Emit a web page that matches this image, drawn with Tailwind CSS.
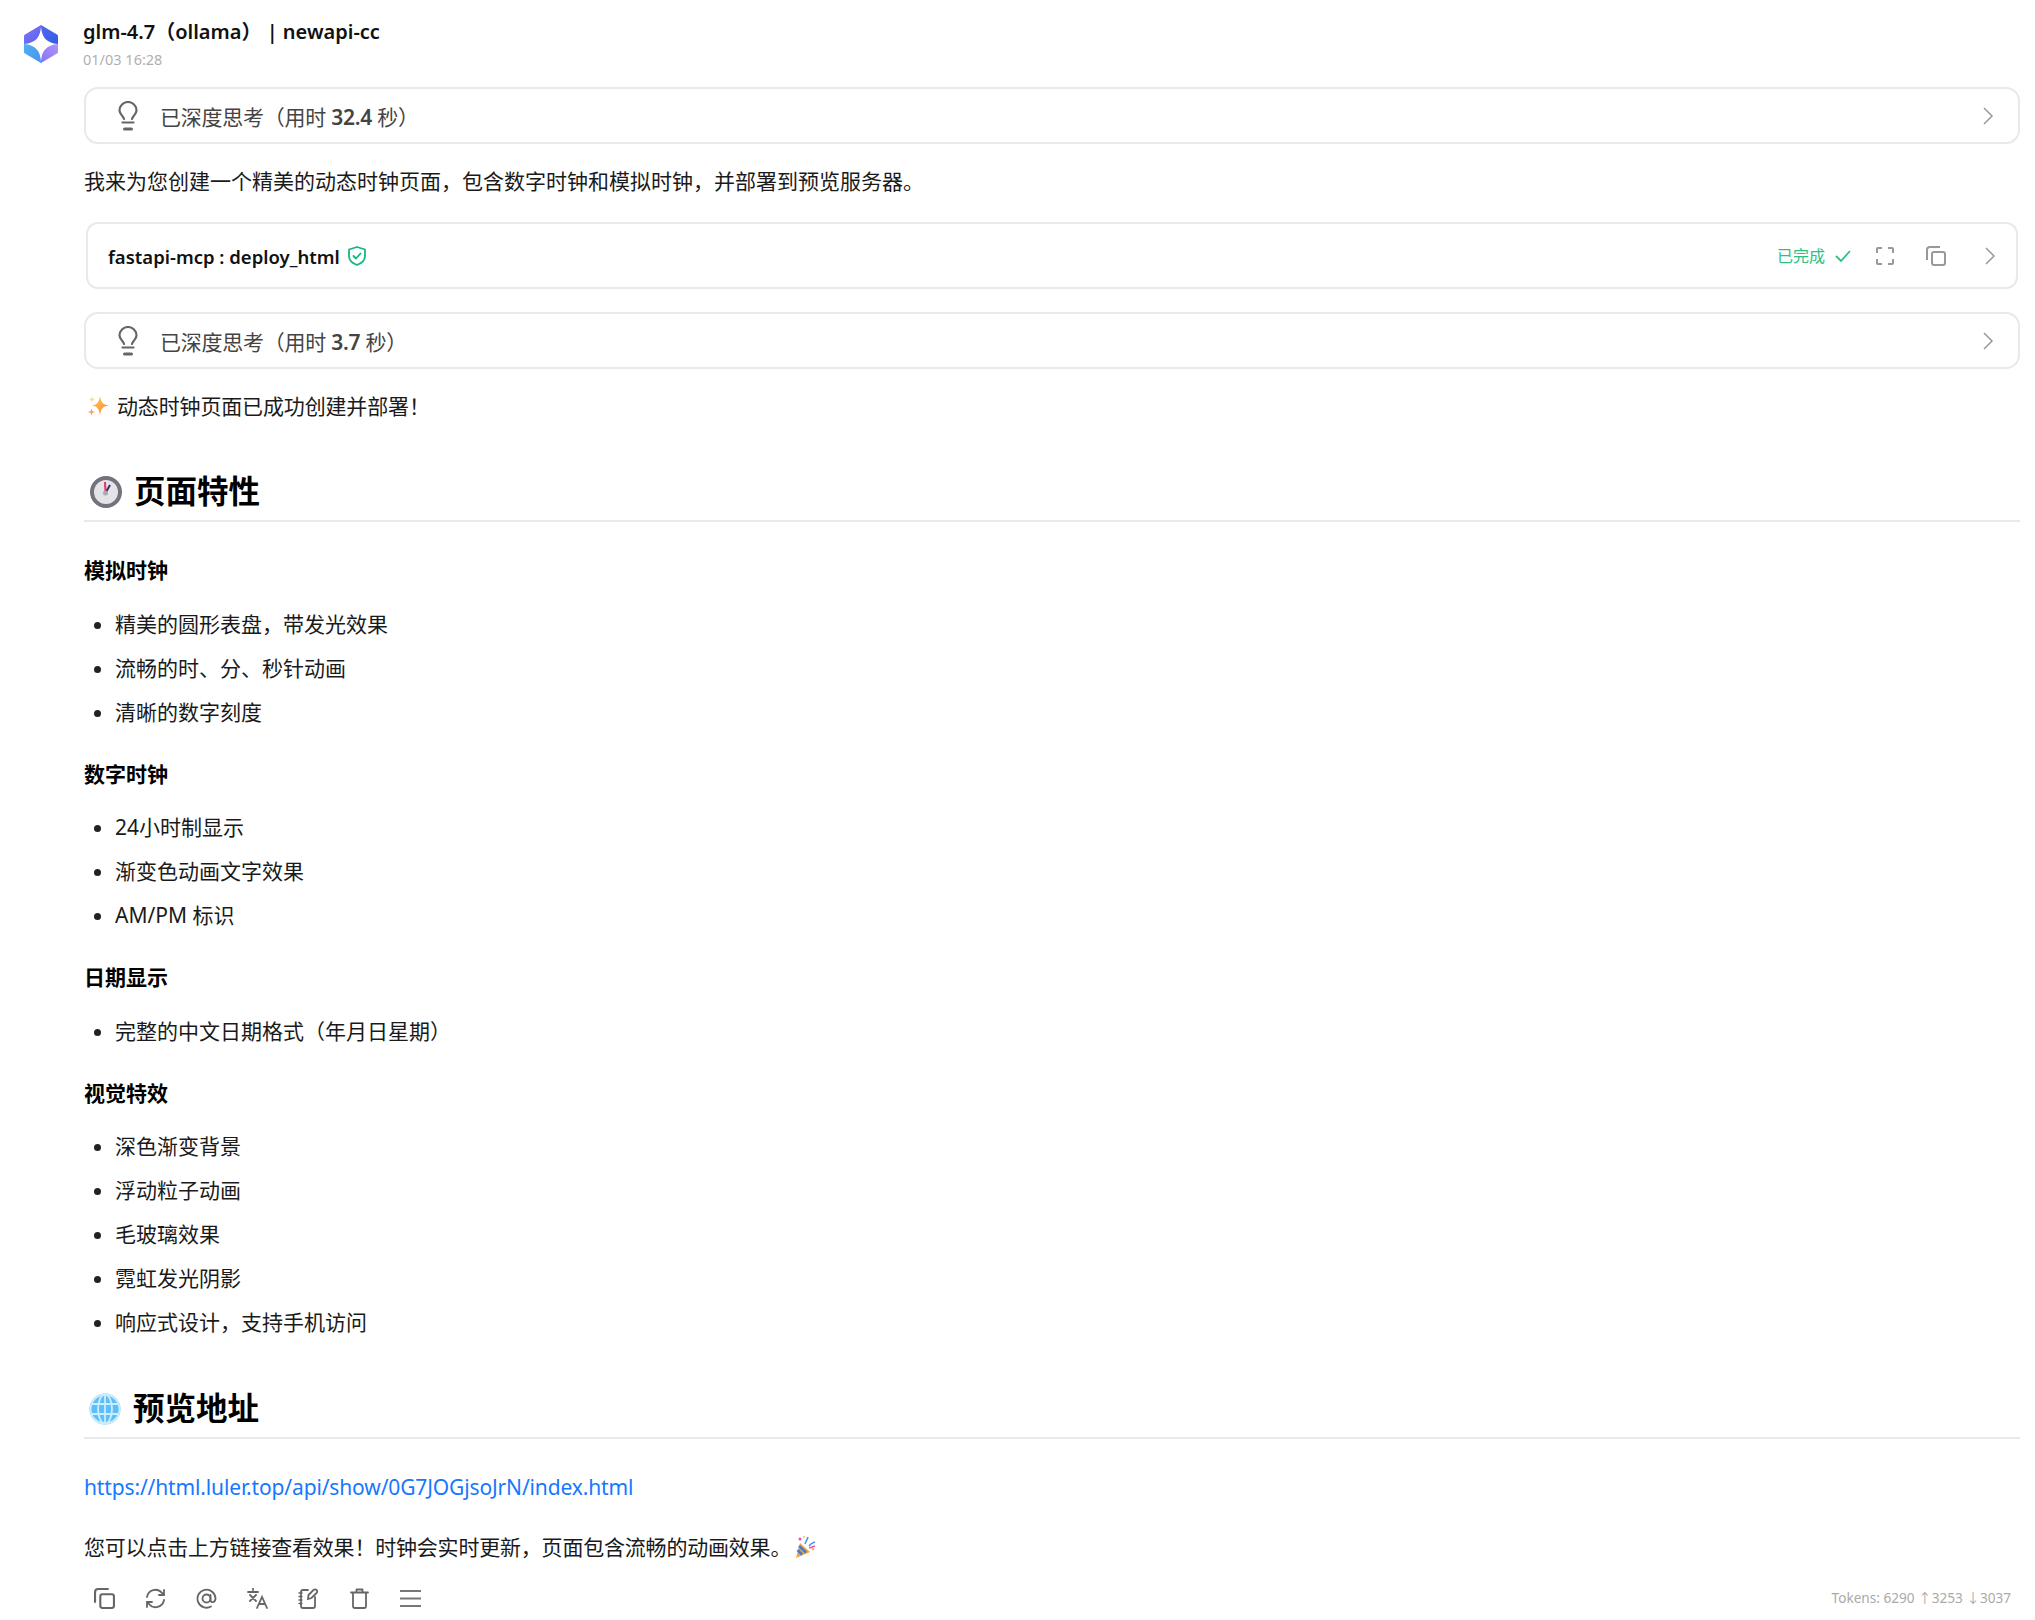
<!DOCTYPE html>
<html lang="zh-CN">
<head>
  <meta charset="UTF-8" />
  <title>glm-4.7</title>
  <script src="https://cdn.jsdelivr.net/npm/@tailwindcss/browser@4"></script>
</head>
<body class="bg-white text-[#1a1a1a] font-['Noto_Sans','Noto_Sans_CJK_SC',sans-serif]">
  <div class="flex h-[1620px] overflow-hidden">
    <!-- Avatar -->
    <div class="w-[84px] shrink-0 pl-[24px] pt-[25px]">
      <svg width="34" height="38" viewBox="0 0 34 38">
        <defs>
          <linearGradient id="q1" x1="0" y1="0" x2="1" y2="1"><stop offset="0" stop-color="#7f7bf6" /><stop offset="1" stop-color="#5a5cf0" /></linearGradient>
          <linearGradient id="q2" x1="0" y1="0" x2="1" y2="1"><stop offset="0" stop-color="#5566ee" /><stop offset="1" stop-color="#2f5de6" /></linearGradient>
          <linearGradient id="q3" x1="0" y1="0" x2="1" y2="1"><stop offset="0" stop-color="#4fb2ee" /><stop offset="1" stop-color="#4a90ee" /></linearGradient>
          <linearGradient id="q4" x1="0" y1="1" x2="1" y2="0"><stop offset="0" stop-color="#8a70f2" /><stop offset="1" stop-color="#ab96fa" /></linearGradient>
        </defs>
        <path d="M17 0 L1 9.500 Q0 10 0 11 V19 H17 Z" fill="url(#q1)" />
        <path d="M17 0 L33 9.500 Q34 10 34 11 V19 H17 Z" fill="url(#q2)" />
        <path d="M17 38 L1 28.500 Q0 28 0 27 V19 H17 Z" fill="url(#q3)" />
        <path d="M17 38 L33 28.500 Q34 28 34 27 V19 H17 Z" fill="url(#q4)" />
        <path d="M17 2 C18 12 22 18 34 19 C22 20 18 26 17 36 C16 26 12 20 0 19 C12 18 16 12 17 2 Z" fill="#fff" />
      </svg>
    </div>

    <div class="w-[1936px] shrink-0">
      <!-- Header -->
      <div class="h-[87px] pt-[20px] -ml-[1px]">
        <div class="text-[20px] leading-[24px] font-semibold text-[#111]">glm-4.7（ollama） | newapi-cc</div>
        <div class="mt-[6px] text-[14.500px] leading-[18px] text-[#b0b0b0]">01/03 16:28</div>
      </div>

      <!-- Thinking -->
      <div class="h-[57px] flex items-center border-2 border-[#e9e9e9] rounded-[14px] pl-[32px] pr-[24px]">
        <svg width="20" height="30" viewBox="0 0 20 30" fill="none" stroke="#666" stroke-width="2.200" stroke-linecap="round">
          <path d="M6 18 C5 14.500 1.500 13 1.500 9.500 A8.500 8.500 0 0 1 18.500 9.500 C18.500 13 15 14.500 14 18" />
          <path d="M4.500 21.500 H15.500" />
          <path d="M6.500 28 H13.500" stroke-width="3" />
        </svg>
        <span class="ml-[22px] pt-[4px] text-[21px] tracking-[-0.250px] text-[#444]">已深度思考（用时 <span class="font-semibold">32.4</span> 秒）</span>
        <svg class="ml-auto" width="12" height="18" viewBox="0 0 12 18" fill="none" stroke="#999" stroke-width="1.500"><path d="M2 1 L10 9 L2 17" /></svg>
      </div>

      <p class="mt-[20px] text-[21px] leading-[34px]">我来为您创建一个精美的动态时钟页面，包含数字时钟和模拟时钟，并部署到预览服务器。</p>

      <!-- Tool call -->
      <div class="mt-[24px] ml-[2px] mr-[2px] h-[67px] flex items-center border-2 border-[#e9e9e9] rounded-[12px] pl-[20px] pr-[20px]">
        <span class="pt-[2px] text-[18.500px] font-semibold text-[#111]">fastapi-mcp : deploy_html</span>
        <svg class="ml-[8px]" width="18" height="20" viewBox="0 0 18 20" fill="none" stroke="#10b981" stroke-width="1.800" stroke-linejoin="round" stroke-linecap="round">
          <path d="M9 1 L17 3.500 V10 C17 14.500 13 17.500 9 19 C5 17.500 1 14.500 1 10 V3.500 Z" />
          <path d="M5.500 10 L8 12.500 L12.500 7.500" />
        </svg>
        <span class="ml-auto text-[16px] text-[#2bc283]">已完成</span>
        <svg class="ml-[10px]" width="16" height="12" viewBox="0 0 16 12" fill="none" stroke="#2bc283" stroke-width="1.800"><path d="M1 6 L6 11 L15 1" /></svg>
        <svg class="ml-[25px]" width="18" height="18" viewBox="0 0 18 18" fill="none" stroke="#999" stroke-width="2">
          <path d="M1 6 V2 Q1 1 2 1 H6 M12 1 H16 Q17 1 17 2 V6 M17 12 V16 Q17 17 16 17 H12 M6 17 H2 Q1 17 1 16 V12" />
        </svg>
        <svg class="ml-[32px]" width="20" height="20" viewBox="0 0 20 20" fill="none" stroke="#999" stroke-width="2">
          <rect x="6" y="6" width="13" height="13" rx="2" />
          <path d="M14 1 H4 Q1 1 1 4 V14" />
        </svg>
        <svg class="ml-[38px]" width="12" height="18" viewBox="0 0 12 18" fill="none" stroke="#999" stroke-width="1.500"><path d="M2 1 L10 9 L2 17" /></svg>
      </div>

      <!-- Thinking -->
      <div class="mt-[23px] h-[57px] flex items-center border-2 border-[#e9e9e9] rounded-[14px] pl-[32px] pr-[24px]">
        <svg width="20" height="30" viewBox="0 0 20 30" fill="none" stroke="#666" stroke-width="2.200" stroke-linecap="round">
          <path d="M6 18 C5 14.500 1.500 13 1.500 9.500 A8.500 8.500 0 0 1 18.500 9.500 C18.500 13 15 14.500 14 18" />
          <path d="M4.500 21.500 H15.500" />
          <path d="M6.500 28 H13.500" stroke-width="3" />
        </svg>
        <span class="ml-[22px] pt-[4px] text-[21px] tracking-[-0.250px] text-[#444]">已深度思考（用时 <span class="font-semibold">3.7</span> 秒）</span>
        <svg class="ml-auto" width="12" height="18" viewBox="0 0 12 18" fill="none" stroke="#999" stroke-width="1.500"><path d="M2 1 L10 9 L2 17" /></svg>
      </div>

      <p class="mt-[20px] text-[21px] leading-[34px] flex items-center tracking-[-0.150px]">
        <svg class="ml-[3px] mr-[8px]" width="22" height="22" viewBox="0 0 22 22">
          <defs>
            <linearGradient id="spark" x1="0" y1="0" x2="1" y2="1"><stop offset="0" stop-color="#fcc84f" /><stop offset="1" stop-color="#f98a3c" /></linearGradient>
          </defs>
          <path d="M13 1 C14 7 15.500 9.500 22 10.500 C15.500 11.500 14 14 13 20 C12 14 10.500 11.500 5 10.500 C10.500 9.500 12 7 13 1 Z" fill="url(#spark)" />
          <path d="M5 1 C5.400 3.500 6 4 8 4.500 C6 5 5.400 5.500 5 8 C4.600 5.500 4 5 2 4.500 C4 4 4.600 3.500 5 1 Z" fill="#fcd9a0" />
          <path d="M4.500 13 C5 16 5.500 16.500 8.500 17 C5.500 17.500 5 18 4.500 21 C4 18 3.500 17.500 0.500 17 C3.500 16.500 4 16 4.500 13 Z" fill="#fba25e" />
        </svg>
        动态时钟页面已成功创建并部署！
      </p>

      <!-- 页面特性 -->
      <h2 class="mt-[46px] pb-[7px] border-b-2 border-[#e9e9e9] text-[31.500px] leading-[44px] font-bold text-black flex items-center">
        <svg class="ml-[6px] mr-[12px] translate-y-px" width="32" height="32" viewBox="0 0 32 32">
          <circle cx="16" cy="16" r="14" fill="#e4e3e8" stroke="#75727c" stroke-width="4" />
          <path d="M15.500 16 L15 6" stroke="#e8345a" stroke-width="2" />
          <path d="M16 16 L20 9" stroke="#3b2d6b" stroke-width="2" />
          <circle cx="15.500" cy="17" r="2.500" fill="#aaa8b0" />
        </svg>
        页面特性
      </h2>

      <h4 class="mt-[31px] text-[21px] leading-[34px] font-bold text-black">模拟时钟</h4>
      <ul class="mt-[20px] list-disc pl-[31px] text-[21px] leading-[34px] flex flex-col gap-[10px] marker:text-[#222]">
        <li>精美的圆形表盘，带发光效果</li>
        <li>流畅的时、分、秒针动画</li>
        <li>清晰的数字刻度</li>
      </ul>

      <h4 class="mt-[28px] text-[21px] leading-[34px] font-bold text-black">数字时钟</h4>
      <ul class="mt-[19px] list-disc pl-[31px] text-[21px] leading-[34px] flex flex-col gap-[10px] marker:text-[#222]">
        <li>24小时制显示</li>
        <li>渐变色动画文字效果</li>
        <li>AM/PM 标识</li>
      </ul>

      <h4 class="mt-[28px] text-[21px] leading-[34px] font-bold text-black">日期显示</h4>
      <ul class="mt-[20px] list-disc pl-[31px] text-[21px] leading-[34px] flex flex-col gap-[10px] marker:text-[#222]">
        <li>完整的中文日期格式（年月日星期）</li>
      </ul>

      <h4 class="mt-[28px] text-[21px] leading-[34px] font-bold text-black">视觉特效</h4>
      <ul class="mt-[19px] list-disc pl-[31px] text-[21px] leading-[34px] flex flex-col gap-[10px] marker:text-[#222]">
        <li>深色渐变背景</li>
        <li>浮动粒子动画</li>
        <li>毛玻璃效果</li>
        <li>霓虹发光阴影</li>
        <li>响应式设计，支持手机访问</li>
      </ul>

      <!-- 预览地址 -->
      <h2 class="mt-[47px] pb-[7px] border-b-2 border-[#e9e9e9] text-[31.500px] leading-[44px] font-bold text-black flex items-center">
        <svg class="ml-[4px] mr-[11px] translate-y-px" width="34" height="32" viewBox="0 0 34 32" fill="none">
          <circle cx="17" cy="16" r="15.500" fill="#5fbdf8" />
          <g stroke="#c9eeff" stroke-width="1.800">
            <circle cx="17" cy="16" r="14.500" />
            <ellipse cx="17" cy="16" rx="7" ry="14.500" />
            <path d="M17 1.500 V30.500 M3 11 H31 M3 21 H31" />
          </g>
        </svg>
        预览地址
      </h2>

      <a href="#" class="block mt-[31px] text-[21px] leading-[34px] tracking-[-0.140px] text-[#1677ff]">https://html.luler.top/api/show/0G7JOGjsoJrN/index.html</a>

      <p class="mt-[26px] text-[21px] leading-[34px] flex items-center tracking-[-0.200px]">
        您可以点击上方链接查看效果！时钟会实时更新，页面包含流畅的动画效果。
        <svg class="ml-[3px]" width="22" height="24" viewBox="0 0 22 24">
          <path d="M6 8 L16 17 L2 23 Z" fill="#f5a142" />
          <path d="M5 11 L12 17.500 M3.500 15 L8 19.500" stroke="#3f7fd0" stroke-width="2.500" />
          <path d="M11 9 C12 6 13 5 14 2 M15 11 C17 8 19 8 21 7" stroke="#3f8ff0" stroke-width="1.500" fill="none" />
          <circle cx="6" cy="4" r="1.500" fill="#f04fb0" />
          <circle cx="10" cy="2" r="1" fill="#f5c542" />
          <circle cx="19" cy="14" r="1.500" fill="#f5b88a" />
          <path d="M15 13 L21 11" stroke="#f04fb0" stroke-width="1.500" />
        </svg>
      </p>

      <!-- Footer toolbar -->
      <div class="mt-[22px] h-[24px] flex items-center pl-[10px] pr-[9px]">
        <div class="flex items-center gap-[30px]">
          <svg width="21" height="21" viewBox="0 0 20 20" fill="none" stroke="#666" stroke-width="2">
            <rect x="6" y="6" width="13" height="13" rx="2" />
            <path d="M14 1 H4 Q1 1 1 4 V14" />
          </svg>
          <svg width="21" height="21" viewBox="0 0 21 21" fill="none" stroke="#666" stroke-width="1.800" stroke-linecap="round">
            <path d="M2 9 A8.500 8.500 0 0 1 17 5 L19 7 M19 2 V7 H14" />
            <path d="M19 12 A8.500 8.500 0 0 1 4 16 L2 14 M2 19 V14 H7" />
          </svg>
          <svg width="21" height="21" viewBox="0 0 21 21" fill="none" stroke="#666" stroke-width="1.800" stroke-linecap="round">
            <circle cx="10.500" cy="10.500" r="4" />
            <path d="M14.500 7 V12 C14.500 15 19.500 15 19.500 10.500 A9 9 0 1 0 15 18.500" />
          </svg>
          <svg width="21" height="21" viewBox="0 0 21 21" fill="none" stroke="#666" stroke-width="1.800" stroke-linecap="round">
            <path d="M1 4 H11 M6 0.500 V2 M3 7 L9 13 M9 7 L3 13" />
            <path d="M10 20 L15 9 L20 20 M12 16 H18" />
          </svg>
          <svg width="21" height="21" viewBox="0 0 21 21" fill="none" stroke="#666" stroke-width="1.800" stroke-linecap="round">
            <path d="M10 2 H5 Q3 2 3 4 V18 Q3 20 5 20 H15 Q17 20 17 18 V9" />
            <path d="M1 5 H4 M1 8.500 H4 M1 12 H4 M1 15.500 H4" stroke-width="1.400" />
            <path d="M10 11 L10.500 7 L15.500 2 Q17 0.800 18.500 2 Q20 3.500 18.500 5 L13.500 10 Z" />
          </svg>
          <svg width="21" height="21" viewBox="0 0 21 21" fill="none" stroke="#666" stroke-width="1.800" stroke-linecap="round" stroke-linejoin="round">
            <path d="M2 4.500 H19 M4 4.500 V18 Q4 20 6 20 H15 Q17 20 17 18 V4.500 M7.500 4.500 V1.500 H13.500 V4.500" />
          </svg>
          <svg width="21" height="21" viewBox="0 0 21 21" fill="none" stroke="#777" stroke-width="2">
            <path d="M0 3 H21 M0 10.500 H21 M0 18 H21" />
          </svg>
        </div>
        <span class="ml-auto text-[13.600px] text-[#aaa]">Tokens: 6290 ↑3253 ↓3037</span>
      </div>
    </div>
  </div>
</body>
</html>
